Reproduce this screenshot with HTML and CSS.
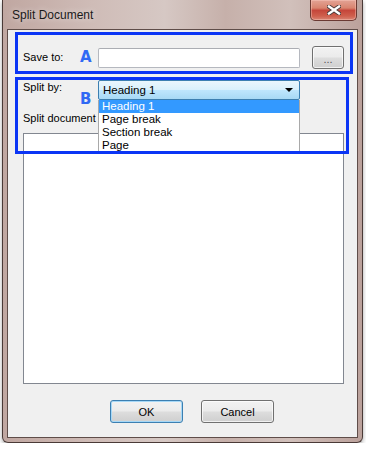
FILE: index.html
```html
<!DOCTYPE html>
<html lang="en">
<head>
    <meta charset="UTF-8">
    <title>Split Document</title>
    <link rel="stylesheet" href="styles.css">
</head>
<body>
    <div class="window">
        <div class="titlebar">
            <span class="title">Split Document</span>
            <button class="close-btn" title="Close">
                <svg width="14" height="10" viewBox="0 0 14 10">
                    <path d="M2 1.5 L12 8.5 M12 1.5 L2 8.5" stroke="#4a3b39" stroke-width="4.2" stroke-linecap="square"/>
                    <path d="M2 1.5 L12 8.5 M12 1.5 L2 8.5" stroke="#ffffff" stroke-width="2.4" stroke-linecap="square"/>
                </svg>
            </button>
        </div>
        <div class="client">
            <div class="mark mark-a">
                <div class="save-row">
                    <span class="lbl save-lbl">Save to:</span>
                    <span class="tag">A</span>
                    <input class="path" type="text">
                    <button class="btn browse">...</button>
                </div>
            </div>

            <div class="split-row">
                <span class="lbl split-lbl">Split by:</span>
                <div class="combo">
                    <div class="combo-box">
                        <span>Heading 1</span>
                        <span class="arrow"></span>
                    </div>
                    <ul class="combo-list">
                        <li class="selected">Heading 1</li>
                        <li>Page break</li>
                        <li>Section break</li>
                        <li>Page</li>
                    </ul>
                </div>
            </div>

            <div class="doc-label">Split document</div>
            <div class="doc-list"></div>

            <div class="actions">
                <button class="btn ok">OK</button>
                <button class="btn cancel">Cancel</button>
            </div>

            <!-- annotation overlay -->
            <div class="mark mark-b"><span class="tag tag-b">B</span></div>
        </div>
    </div>
</body>
</html>
```

FILE: styles.css
```css
body {
    margin: 0;
    background: #ffffff;
    font-family: "Liberation Sans", Arial, sans-serif;
    font-size: 11px;
    color: #000;
    overflow: hidden;
}

.window {
    position: relative;
    box-sizing: border-box;
    width: 361px;
    height: 443px;
    margin-left: 2px;
    padding: 0 4px 4px 4px;
    border: 1px solid #4a3a37;
    border-top: none;
    border-radius: 0 0 6px 6px;
    background: linear-gradient(to right, #c0a7a1 0%, #cfbcb7 25%, #d6c8c4 45%, #c6b0aa 62%, #d1c0bb 80%, #bba19b 100%);
    box-shadow: 0 2px 4px rgba(0, 0, 0, 0.35);
}

.titlebar {
    height: 29px;
    display: flex;
    align-items: center;
    padding-left: 5px;
}

.title {
    font-size: 12px;
    color: #1a1a1a;
    text-shadow: 0 0 6px rgba(255, 255, 255, 0.7);
}

.close-btn {
    position: absolute;
    top: 0;
    right: 5px;
    width: 47px;
    height: 21px;
    padding: 0;
    border: 1px solid #6b3a33;
    border-top: none;
    border-radius: 0 0 5px 5px;
    background: linear-gradient(#e3a395 0%, #d9846f 40%, #c5463a 52%, #cf5f4d 80%, #d98574 100%);
    display: flex;
    align-items: center;
    justify-content: center;
    box-shadow: inset 0 0 0 1px rgba(255, 210, 200, 0.4);
}

.client {
    position: relative;
    box-sizing: border-box;
    height: 409px;
    padding: 2px 4px 0 7px;
    border: 1px solid #5f4d49;
    background: #f0f0f0;
}

/* blue annotation boxes */
.mark {
    box-sizing: border-box;
    border: 3px solid #0b35f5;
}

.mark-a {
    height: 42px;
    padding: 9px 0 0 5px;
}

.mark-b {
    position: absolute;
    left: 7px;
    top: 47px;
    width: 334px;
    height: 77px;
    z-index: 3;
}

.tag {
    font-family: "DejaVu Sans", sans-serif;
    font-size: 15px;
    line-height: 15px;
    font-weight: bold;
    color: #3069f4;
}

.tag-b {
    position: absolute;
    left: 62px;
    top: 12px;
}

.save-row {
    display: flex;
    align-items: center;
    height: 27px;
}

.lbl {
    line-height: 13px;
}

.save-lbl {
    width: 57px;
}

.save-row .tag {
    width: 18px;
}

.path {
    box-sizing: border-box;
    width: 202px;
    height: 20px;
    margin: 0;
    border: 1px solid #b5b8bf;
    border-top-color: #abadb3;
    border-radius: 2px;
    background: #fff;
}

.btn {
    box-sizing: border-box;
    padding: 0;
    font-family: "Liberation Sans", Arial, sans-serif;
    font-size: 11px;
    color: #000;
    border: 1px solid #707070;
    border-radius: 3px;
    background: linear-gradient(#f2f2f2 0%, #ebebeb 48%, #dddddd 52%, #cfcfcf 100%);
    box-shadow: inset 0 0 0 1px rgba(255, 255, 255, 0.7);
}

.browse {
    width: 32px;
    height: 23px;
    margin-left: 12px;
    padding-top: 3px;
    color: #555;
}

.split-row {
    display: flex;
    align-items: flex-start;
    margin: 6px 0 0 8px;
}

.split-lbl {
    width: 75px;
    padding-top: 1px;
}

.combo {
    position: relative;
    width: 202px;
}

.combo-box {
    box-sizing: border-box;
    height: 20px;
    padding: 0 6px 0 4px;
    display: flex;
    align-items: center;
    justify-content: space-between;
    font-size: 11.5px;
    border: 1px solid #3c7fb1;
    border-radius: 2px;
    background: linear-gradient(#eaf6fd 0%, #d9f0fc 48%, #bee6fd 52%, #a7d9f5 100%);
}

.arrow {
    width: 0;
    height: 0;
    border-left: 4px solid transparent;
    border-right: 4px solid transparent;
    border-top: 4px solid #000;
}

.combo-list {
    position: absolute;
    top: 20px;
    left: 0;
    width: 202px;
    box-sizing: border-box;
    margin: 0;
    padding: 0;
    list-style: none;
    background: #fff;
    border: 1px solid #a9a9a9;
    border-top: none;
    z-index: 2;
}

.combo-list li {
    height: 13px;
    line-height: 13px;
    padding-left: 3px;
    font-size: 11.5px;
}

.combo-list .selected {
    background: #3399ff;
    color: #fff;
}

.doc-label {
    margin: 12px 0 0 8px;
    line-height: 13px;
}

.doc-list {
    box-sizing: border-box;
    width: 321px;
    height: 251px;
    margin: 8px 0 0 8px;
    border: 1px solid #828790;
    background: #fff;
}

.actions {
    display: flex;
    gap: 18px;
    margin: 16px 0 0 95px;
}

.actions .btn {
    width: 73px;
    height: 23px;
}

.ok {
    border-color: #3c7fb1;
    box-shadow: inset 0 0 0 1px #a6d8f7;
}
```
